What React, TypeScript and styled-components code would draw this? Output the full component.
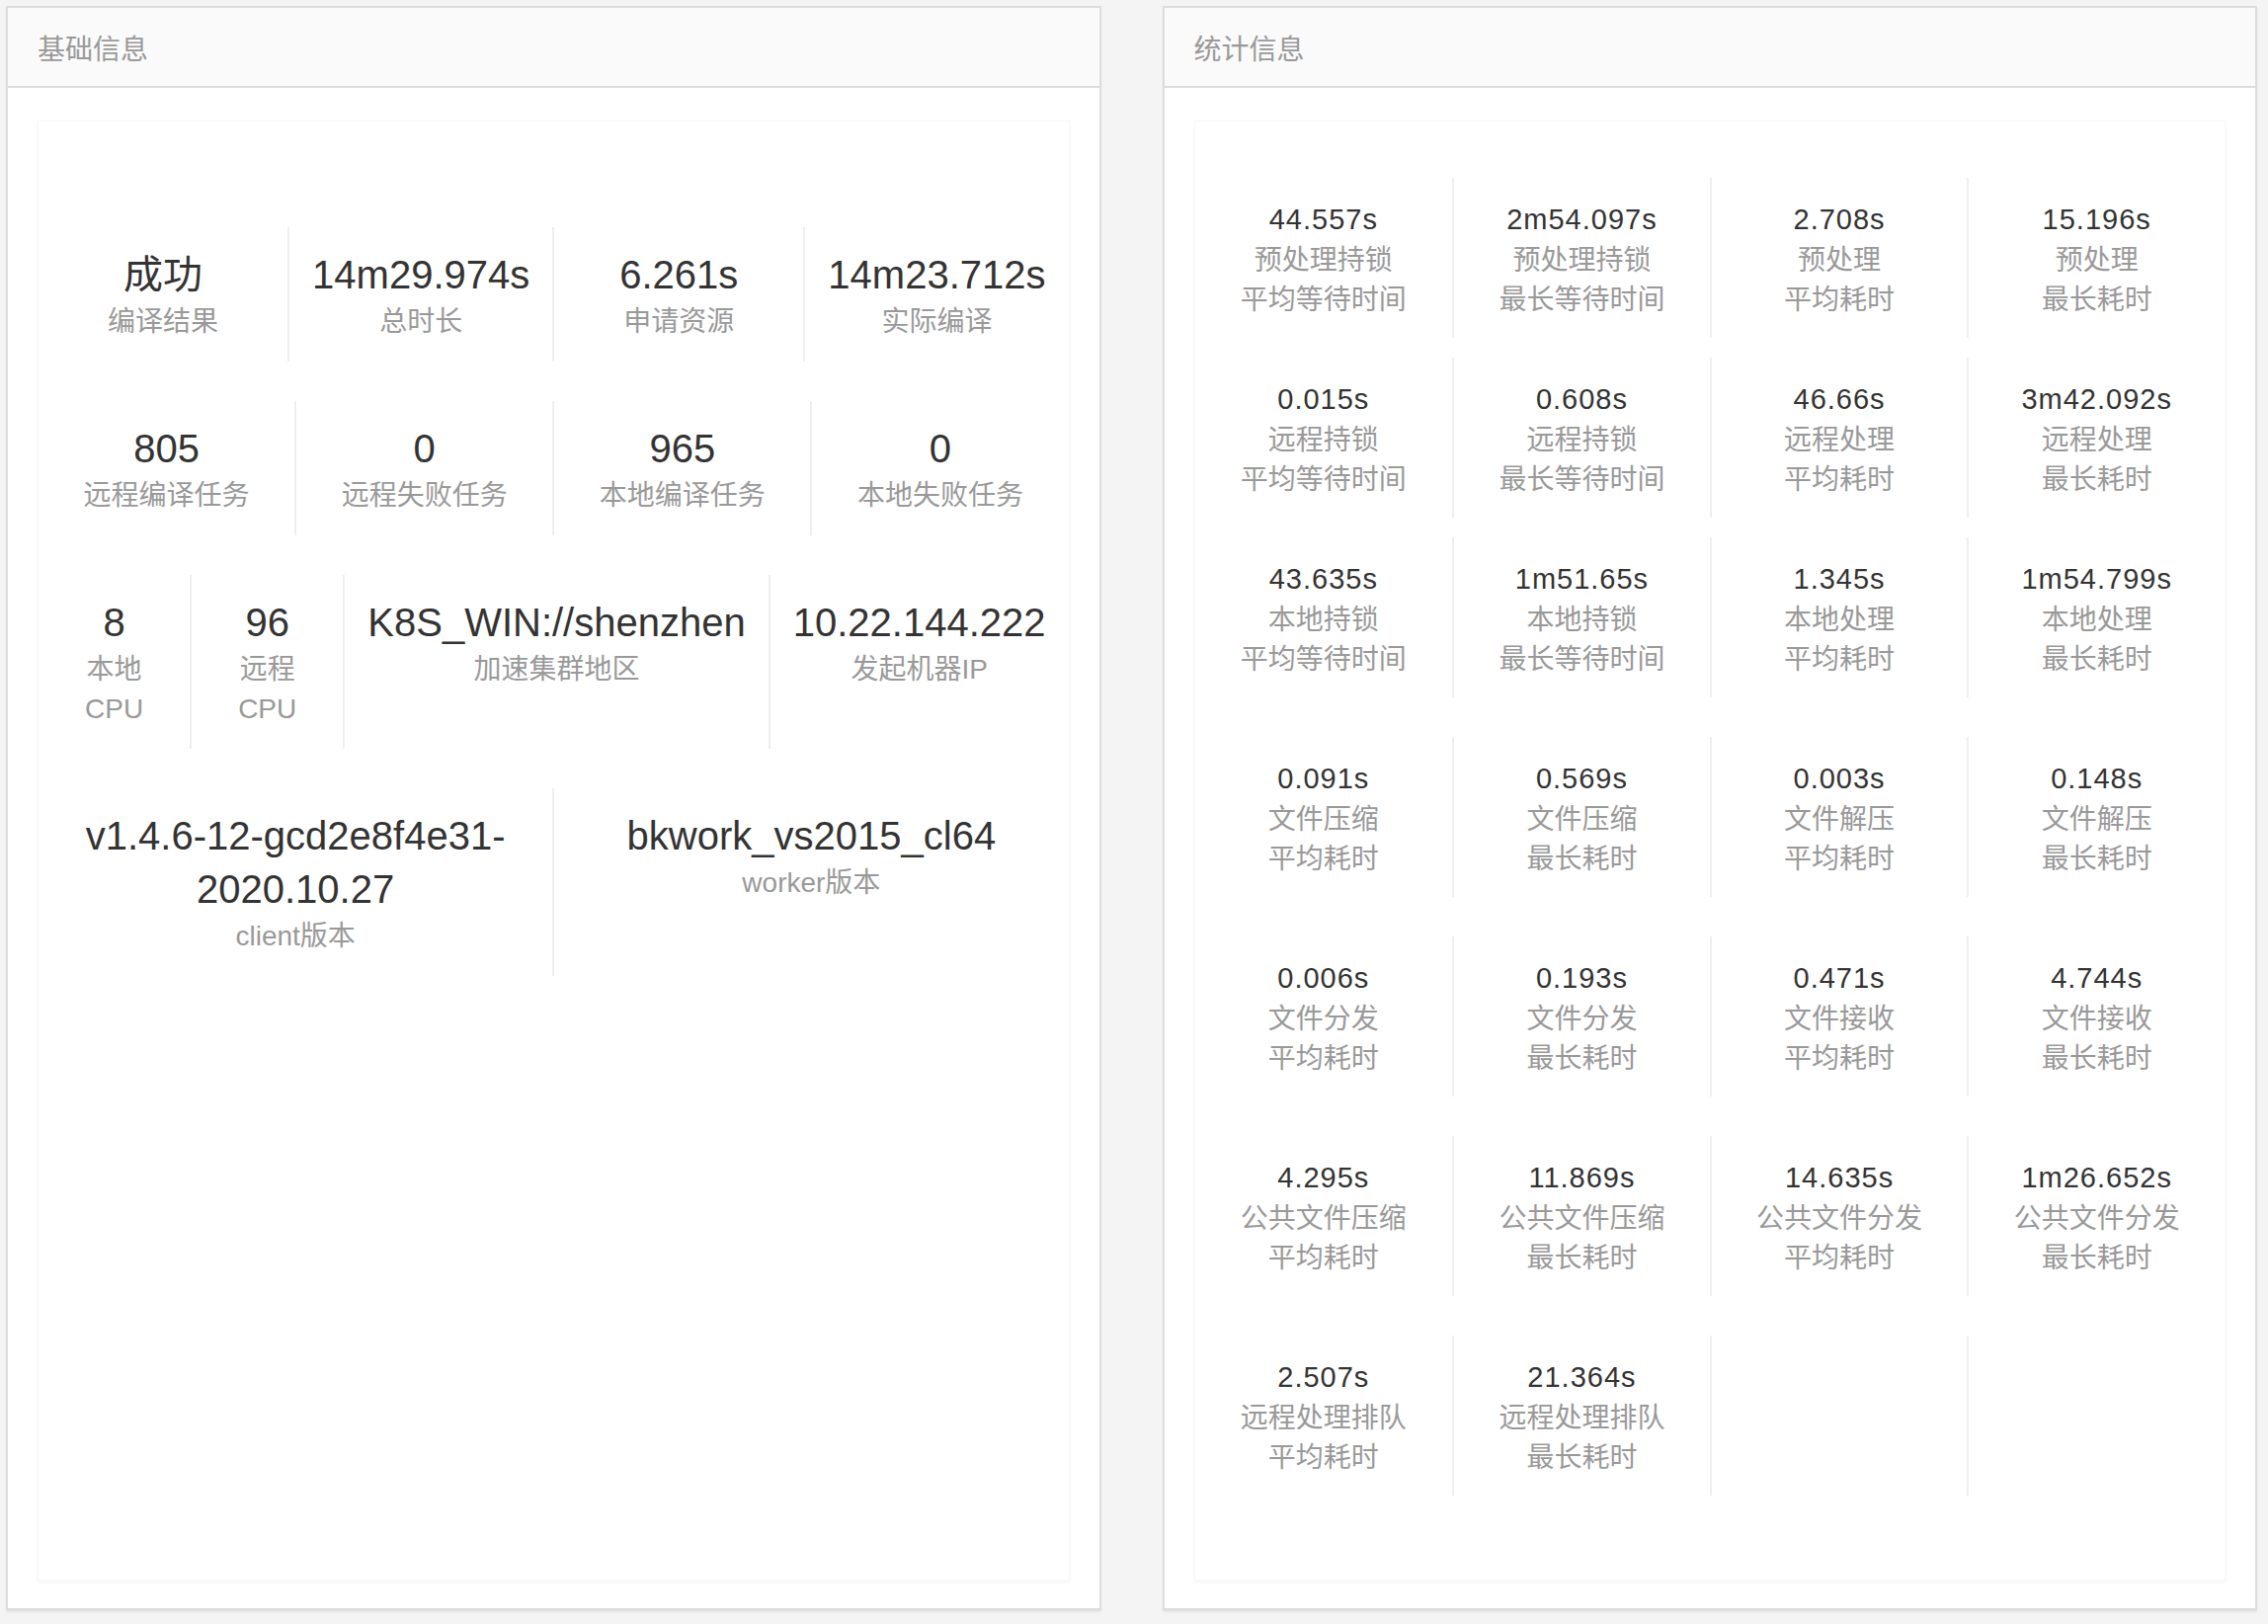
import React from 'react';
import styled, { createGlobalStyle } from 'styled-components';

const GlobalStyle = createGlobalStyle`
  html, body {
    margin: 0;
    padding: 0;
    background: #f4f4f4;
  }
  body {
    font-family: "Liberation Sans", "Noto Sans CJK SC", sans-serif;
  }
  * { box-sizing: border-box; }
`;

const Page = styled.div`
  display: flex;
  gap: 62px;
  height: 1644px;
  padding: 6px 11px 14px 6px;
`;

const Panel = styled.section`
  flex: 1 1 0;
  min-width: 0;
  display: flex;
  flex-direction: column;
  background: #fff;
  border: 2px solid #dddddd;
  box-shadow: 0 2px 2px rgba(0, 0, 0, 0.07);
`;

const PanelHeader = styled.header`
  height: 81px;
  display: flex;
  align-items: center;
  padding: 1px 0 0 30px;
  background: #fafafa;
  border-bottom: 2px solid #dddddd;
  font-size: 28px;
  color: #999;
`;

const PanelBody = styled.div`
  flex: 1;
  display: flex;
  padding: 33px 30px 28px 30px;
`;

const Card = styled.div<{ $top: number }>`
  flex: 1;
  min-width: 0;
  border: 1px solid #f8f8f8;
  box-shadow: 0 2px 4px rgba(0, 0, 0, 0.045);
  padding-top: ${(p) => p.$top}px;
`;

const InfoRow = styled.div`
  display: flex;
  & + & {
    margin-top: 40px;
  }
`;

const InfoCell = styled.div`
  flex: 1 1 0;
  padding: 21px 23px 20px;
  text-align: center;
  & + & {
    border-left: 2px solid #efefef;
  }
`;

const InfoValue = styled.div<{ $wrap?: boolean }>`
  font-size: 40px;
  line-height: 54px;
  color: #333;
  white-space: ${(p) => (p.$wrap ? 'normal' : 'nowrap')};
  & + div {
    margin-top: 1px;
  }
`;

const Label = styled.div`
  font-size: 28px;
  line-height: 40px;
  color: #999;
`;

const StatGroup = styled.div<{ $gap: number }>`
  display: grid;
  grid-template-columns: repeat(4, 1fr);
  row-gap: ${(p) => p.$gap}px;
  & + & {
    margin-top: 40px;
  }
`;

const StatCell = styled.div`
  padding: 21px 0 18px;
  text-align: center;
  min-height: 162px;
  &:not(:nth-child(4n + 1)) {
    border-left: 2px solid #efefef;
  }
`;

const StatValue = styled.div`
  font-size: 29px;
  line-height: 43px;
  letter-spacing: 1px;
  color: #333;
  white-space: nowrap;
`;

type Stat = { value: string; name: string; kind: string } | null;

const groupA: Stat[] = [
  { value: '44.557s', name: '预处理持锁', kind: '平均等待时间' },
  { value: '2m54.097s', name: '预处理持锁', kind: '最长等待时间' },
  { value: '2.708s', name: '预处理', kind: '平均耗时' },
  { value: '15.196s', name: '预处理', kind: '最长耗时' },
  { value: '0.015s', name: '远程持锁', kind: '平均等待时间' },
  { value: '0.608s', name: '远程持锁', kind: '最长等待时间' },
  { value: '46.66s', name: '远程处理', kind: '平均耗时' },
  { value: '3m42.092s', name: '远程处理', kind: '最长耗时' },
  { value: '43.635s', name: '本地持锁', kind: '平均等待时间' },
  { value: '1m51.65s', name: '本地持锁', kind: '最长等待时间' },
  { value: '1.345s', name: '本地处理', kind: '平均耗时' },
  { value: '1m54.799s', name: '本地处理', kind: '最长耗时' },
];

const groupB: Stat[] = [
  { value: '0.091s', name: '文件压缩', kind: '平均耗时' },
  { value: '0.569s', name: '文件压缩', kind: '最长耗时' },
  { value: '0.003s', name: '文件解压', kind: '平均耗时' },
  { value: '0.148s', name: '文件解压', kind: '最长耗时' },
  { value: '0.006s', name: '文件分发', kind: '平均耗时' },
  { value: '0.193s', name: '文件分发', kind: '最长耗时' },
  { value: '0.471s', name: '文件接收', kind: '平均耗时' },
  { value: '4.744s', name: '文件接收', kind: '最长耗时' },
  { value: '4.295s', name: '公共文件压缩', kind: '平均耗时' },
  { value: '11.869s', name: '公共文件压缩', kind: '最长耗时' },
  { value: '14.635s', name: '公共文件分发', kind: '平均耗时' },
  { value: '1m26.652s', name: '公共文件分发', kind: '最长耗时' },
  { value: '2.507s', name: '远程处理排队', kind: '平均耗时' },
  { value: '21.364s', name: '远程处理排队', kind: '最长耗时' },
  null,
  null,
];

const renderStats = (list: Stat[]) =>
  list.map((s, i) =>
    s ? (
      <StatCell key={i}>
        <StatValue>{s.value}</StatValue>
        <Label>{s.name}</Label>
        <Label>{s.kind}</Label>
      </StatCell>
    ) : (
      <StatCell key={i} />
    )
  );

export default function App() {
  return (
    <>
      <GlobalStyle />
      <Page>
        <Panel>
          <PanelHeader>基础信息</PanelHeader>
          <PanelBody>
            <Card $top={107}>
              <InfoRow>
                <InfoCell>
                  <InfoValue>成功</InfoValue>
                  <Label>编译结果</Label>
                </InfoCell>
                <InfoCell>
                  <InfoValue>14m29.974s</InfoValue>
                  <Label>总时长</Label>
                </InfoCell>
                <InfoCell>
                  <InfoValue>6.261s</InfoValue>
                  <Label>申请资源</Label>
                </InfoCell>
                <InfoCell>
                  <InfoValue>14m23.712s</InfoValue>
                  <Label>实际编译</Label>
                </InfoCell>
              </InfoRow>
              <InfoRow>
                <InfoCell>
                  <InfoValue>805</InfoValue>
                  <Label>远程编译任务</Label>
                </InfoCell>
                <InfoCell>
                  <InfoValue>0</InfoValue>
                  <Label>远程失败任务</Label>
                </InfoCell>
                <InfoCell>
                  <InfoValue>965</InfoValue>
                  <Label>本地编译任务</Label>
                </InfoCell>
                <InfoCell>
                  <InfoValue>0</InfoValue>
                  <Label>本地失败任务</Label>
                </InfoCell>
              </InfoRow>
              <InfoRow>
                <InfoCell>
                  <InfoValue>8</InfoValue>
                  <Label>本地</Label>
                  <Label>CPU</Label>
                </InfoCell>
                <InfoCell>
                  <InfoValue>96</InfoValue>
                  <Label>远程</Label>
                  <Label>CPU</Label>
                </InfoCell>
                <InfoCell>
                  <InfoValue>K8S_WIN://shenzhen</InfoValue>
                  <Label>加速集群地区</Label>
                </InfoCell>
                <InfoCell>
                  <InfoValue>10.22.144.222</InfoValue>
                  <Label>发起机器IP</Label>
                </InfoCell>
              </InfoRow>
              <InfoRow>
                <InfoCell>
                  <InfoValue $wrap>
                    v1.4.6-12-gcd2e8f4e31-<wbr />2020.10.27
                  </InfoValue>
                  <Label>client版本</Label>
                </InfoCell>
                <InfoCell>
                  <InfoValue>bkwork_vs2015_cl64</InfoValue>
                  <Label>worker版本</Label>
                </InfoCell>
              </InfoRow>
            </Card>
          </PanelBody>
        </Panel>
        <Panel>
          <PanelHeader>统计信息</PanelHeader>
          <PanelBody>
            <Card $top={57}>
              <StatGroup $gap={20}>{renderStats(groupA)}</StatGroup>
              <StatGroup $gap={40}>{renderStats(groupB)}</StatGroup>
            </Card>
          </PanelBody>
        </Panel>
      </Page>
    </>
  );
}
